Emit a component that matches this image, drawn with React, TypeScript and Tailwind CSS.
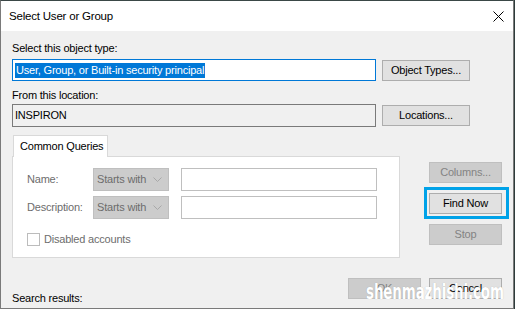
import React from "react";

const font = { fontFamily: '"Liberation Sans", Arial, sans-serif', letterSpacing: "-0.2px" };

function Btn({ children, disabled, w = "w-[73px]" }: { children: React.ReactNode; disabled?: boolean; w?: string }) {
  return (
    <div
      className={`${w} h-[21px] shrink-0 flex items-center justify-center border text-[11px] leading-none whitespace-nowrap ${
        disabled ? "bg-[#cccccc] border-[#bfbfbf] text-[#838383]" : "bg-[#e1e1e1] border-[#adadad] text-black"
      }`}
    >
      {children}
    </div>
  );
}

function Combo() {
  return (
    <div className="w-[76px] h-[23px] shrink-0 bg-[#cccccc] border border-[#bfbfbf] flex items-center pl-[3px] pr-[6px] text-[#6d6d6d] text-[11px] whitespace-nowrap">
      <span className="flex-1">Starts with</span>
      <svg width="9" height="6" viewBox="0 0 9 6">
        <path d="M0.5 0.5 L4.5 4.5 L8.5 0.5" fill="none" stroke="#a8a8a8" strokeWidth="1" />
      </svg>
    </div>
  );
}

export default function App() {
  return (
    <div className="w-[515px] h-[309px] bg-[#2e3c3b] overflow-hidden relative" style={font}>
      <div className="w-[514px] h-[309px] flex flex-col border-t border-t-[#3a4746] border-x border-b border-x-[#7a7a7a] border-b-[#7a7a7a]">
        {/* title bar */}
        <div className="h-[30px] bg-white flex items-center pl-[8px] pr-[9px] shrink-0">
          <span className="text-[11.5px] text-black flex-1 pt-[1px] whitespace-nowrap">Select User or Group</span>
          <svg width="11" height="11" viewBox="0 0 11 11">
            <path d="M0.5 0.5 L10.5 10.5 M10.5 0.5 L0.5 10.5" stroke="#000" strokeWidth="1" />
          </svg>
        </div>
        {/* body */}
        <div className="flex-1 bg-[#f0f0f0] pl-[11px] pr-[10px] pt-[10px] text-[11px] text-black flex flex-col whitespace-nowrap">
          <div className="h-[15px] leading-[15px]">Select this object type:</div>
          <div className="flex items-start mt-[3px]">
            <div className="w-[364px] h-[22px] shrink-0 bg-white border border-[#0078d7] flex items-center pl-[2px]">
              <span className="bg-[#0078d7] text-white h-[15px] leading-[15px] px-[1px]">User, Group, or Built-in security principal</span>
            </div>
            <div className="ml-[6px] mt-[1px]">
              <Btn w="w-[88px]">Object Types...</Btn>
            </div>
          </div>
          <div className="h-[15px] leading-[15px] mt-[7px]">From this location:</div>
          <div className="flex items-start mt-[1px]">
            <div className="w-[364px] h-[23px] shrink-0 bg-[#f0f0f0] border border-[#7a7a7a] flex items-center pl-[2px]">
              INSPIRON
            </div>
            <div className="ml-[6px] mt-[1px]">
              <Btn w="w-[88px]">Locations...</Btn>
            </div>
          </div>
          {/* middle */}
          <div className="flex items-start mt-[8px]">
            <div className="w-[388px] shrink-0 flex flex-col">
              <div className="ml-[1px] w-[95px] h-[22px] bg-white border-t border-x border-[#d9d9d9] flex items-center pl-[6px] -mb-px relative z-10">
                Common Queries
              </div>
              <div className="h-[102px] bg-white border border-[#d9d9d9] pt-[11px] pl-[14px] flex flex-col">
                <div className="flex items-center">
                  <span className="w-[66px] text-[#6d6d6d]">Name:</span>
                  <Combo />
                  <div className="ml-[12px] w-[196px] h-[23px] bg-white border border-[#bfbfbf]" />
                </div>
                <div className="flex items-center mt-[5px]">
                  <span className="w-[66px] text-[#6d6d6d]">Description:</span>
                  <Combo />
                  <div className="ml-[12px] w-[196px] h-[23px] bg-white border border-[#bfbfbf]" />
                </div>
                <div className="flex items-center mt-[12px]">
                  <div className="w-[13px] h-[13px] border border-[#bcbcbc] bg-white" />
                  <span className="ml-[4px] text-[#6d6d6d]">Disabled accounts</span>
                </div>
              </div>
            </div>
            <div className="ml-[29px] w-[73px] shrink-0 flex flex-col pt-[27px]">
              <Btn disabled>Columns...</Btn>
              <div className="mt-[4px] -ml-[5px] -mr-[7px] w-[85px] h-[32px] border-[3px] border-[#00a2e8] flex items-center pl-[2px]">
                <Btn>Find Now</Btn>
              </div>
              <div className="mt-[5px]">
                <Btn disabled>Stop</Btn>
              </div>
            </div>
          </div>
          {/* bottom */}
          <div className="flex items-start mt-[20px]">
            <div className="flex-1 mt-[13px] h-[15px] leading-[15px]">Search results:</div>
            <div className="flex mr-[1px]">
              <Btn disabled>OK</Btn>
              <div className="ml-[8px]">
                <Btn>Cancel</Btn>
              </div>
            </div>
          </div>
        </div>
      </div>
      {/* watermark */}
      <div
        className="absolute left-[366px] top-[281px] text-white font-bold text-[22px] leading-none whitespace-nowrap"
        style={{ fontFamily: '"DejaVu Sans Condensed", "Liberation Sans Narrow", sans-serif', transform: "scaleX(0.68)", transformOrigin: "left top", textShadow: "0 0 1px rgba(0,0,0,0.25)" }}
      >
        shenmazhishi.com
      </div>
    </div>
  );
}
